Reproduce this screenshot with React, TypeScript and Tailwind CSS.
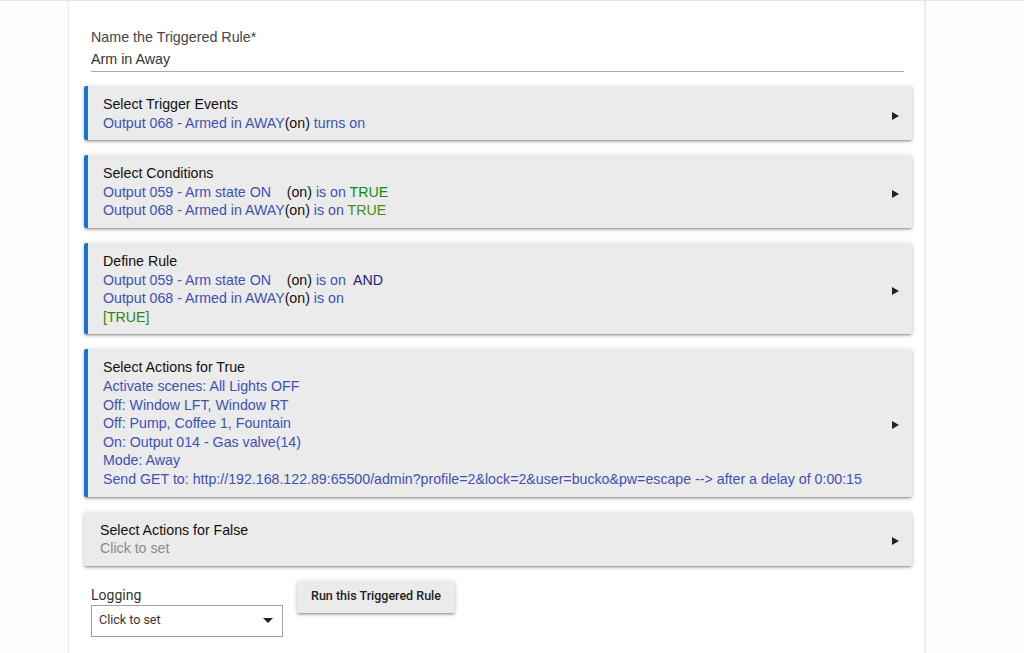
import React from "react";

const BLUE = "text-[#3f51b5]";

function On() {
  return <span className="text-[#111]">(on)</span>;
}

function Arrow() {
  return (
    <div className="mt-[4px] w-0 h-0 border-y-[4px] border-y-transparent border-l-[7px] border-l-[#222] shrink-0" />
  );
}

function Card({
  children,
  accent = true,
}: {
  children: React.ReactNode;
  accent?: boolean;
}) {
  return (
    <div
      className={
        "ml-[15px] w-[828px] bg-[#ebebeb] rounded-[2px] flex items-center justify-between pt-[9px] pb-[8px] pr-[13px] shadow-[0_2px_2px_0_rgba(0,0,0,0.14),0_3px_1px_-2px_rgba(0,0,0,0.12),0_1px_5px_0_rgba(0,0,0,0.2)] " +
        (accent ? "border-l-4 border-l-[#1a73cc] pl-[15px]" : "pl-[16px]")
      }
    >
      <div className="text-[14.2px] leading-[18.6px] whitespace-pre">{children}</div>
      <Arrow />
    </div>
  );
}

export default function App() {
  return (
    <div
      className="w-full h-[653px] bg-[#fdfdfd] border-t border-[#e6e6e6] overflow-hidden"
      style={{ fontFamily: '"Liberation Sans", Arial, sans-serif' }}
    >
      <div className="ml-[68px] w-[858px] h-full bg-white border-l border-l-[#ececec] border-r-2 border-r-[#ececec] pt-[27px]">
        <div className="ml-[22px] w-[813px]">
          <div className="text-[14.3px] leading-[18px] text-[#444]">Name the Triggered Rule*</div>
          <div className="mt-[4px] text-[14.3px] leading-[18px] text-[#333] pb-[3px] border-b border-b-[#aaaaaa]">
            Arm in Away
          </div>
        </div>

        <div className="mt-[14px] flex flex-col gap-[15px]">
          <Card>
            <div className="text-[#111]">Select Trigger Events</div>
            <div className={BLUE}>
              Output 068 - Armed in AWAY<On /> turns on
            </div>
          </Card>

          <Card>
            <div className="text-[#111]">Select Conditions</div>
            <div className={BLUE}>
              {"Output 059 - Arm state ON    "}
              <On /> is on <span className="text-[#138a13]">TRUE</span>
            </div>
            <div className={BLUE}>
              Output 068 - Armed in AWAY<On /> is on{" "}
              <span className="text-[#4f8a0b]">TRUE</span>
            </div>
          </Card>

          <Card>
            <div className="text-[#111]">Define Rule</div>
            <div className={BLUE}>
              {"Output 059 - Arm state ON    "}
              <On />
              {" is on  "}
              <span className="text-[#1a237e]">AND</span>
            </div>
            <div className={BLUE}>
              Output 068 - Armed in AWAY<On /> is on
            </div>
            <div className="text-[#2f8a12]">[TRUE]</div>
          </Card>

          <Card>
            <div className="text-[#111]">Select Actions for True</div>
            <div className={BLUE}>Activate scenes: All Lights OFF</div>
            <div className={BLUE}>Off: Window LFT, Window RT</div>
            <div className={BLUE}>Off: Pump, Coffee 1, Fountain</div>
            <div className={BLUE}>On: Output 014 - Gas valve(14)</div>
            <div className={BLUE}>Mode: Away</div>
            <div className={BLUE}>
              Send GET to: http://192.168.122.89:65500/admin?profile=2&amp;lock=2&amp;user=bucko&amp;pw=escape --&gt; after a delay of 0:00:15
            </div>
          </Card>

          <Card accent={false}>
            <div className="text-[#111]">Select Actions for False</div>
            <div className="text-[#8a8a8a]">Click to set</div>
          </Card>
        </div>

        <div
          className="mt-[15px] ml-[22px] flex items-start gap-[14px]"
          style={{ fontFamily: 'Roboto, "Liberation Sans", Arial, sans-serif' }}
        >
          <div className="pt-[6px]">
            <div className="text-[14px] leading-[16px] text-[#333]">Logging</div>
            <div className="mt-[2px] w-[192px] h-[32px] border border-[#a0a0a0] bg-white flex items-center justify-between pl-[7px] pr-[9px]">
              <span className="text-[12.5px] text-[#333]">Click to set</span>
              <div className="w-0 h-0 border-x-[5px] border-x-transparent border-t-[5px] border-t-[#222]" />
            </div>
          </div>
          <button className="w-[158px] h-[32px] bg-[#ebebeb] rounded-[2px] text-[12.5px] font-medium text-[#222] shadow-[0_2px_2px_0_rgba(0,0,0,0.14),0_3px_1px_-2px_rgba(0,0,0,0.12),0_1px_5px_0_rgba(0,0,0,0.2)]">
            Run this Triggered Rule
          </button>
        </div>
      </div>
    </div>
  );
}
